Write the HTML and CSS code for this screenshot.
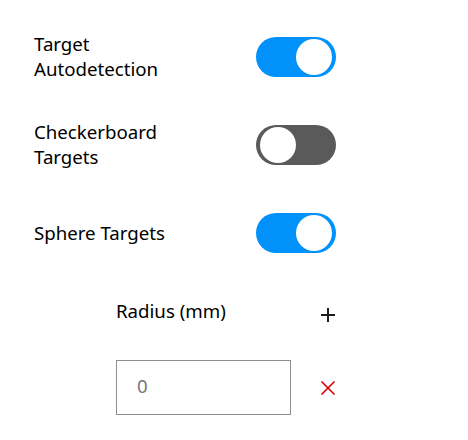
FILE: index.html
```html
<!DOCTYPE html>
<html>
<head>
<meta charset="utf-8">
<link rel="stylesheet" href="styles.css">
</head>
<body>
<div class="panel">
  <div class="row">
    <div class="label">Target<br>Autodetection</div>
    <div class="toggle on"><span class="knob"></span></div>
  </div>
  <div class="row">
    <div class="label">Checkerboard<br>Targets</div>
    <div class="toggle off"><span class="knob"></span></div>
  </div>
  <div class="row">
    <div class="label">Sphere Targets</div>
    <div class="toggle on"><span class="knob"></span></div>
  </div>
  <div class="radius">
    <div class="radius-head">
      <div class="radius-label">Radius (mm)</div>
      <div class="icon-btn">
        <svg width="16" height="16" viewBox="0 0 16 16"><path d="M8 1V15M1 8H15" stroke="#1c1c1c" stroke-width="2" fill="none"/></svg>
      </div>
    </div>
    <div class="radius-item">
      <div class="input">0</div>
      <div class="icon-btn">
        <svg width="16" height="16" viewBox="0 0 16 16"><path d="M1.5 1.5L14.5 14.5M14.5 1.5L1.5 14.5" stroke="#d70000" stroke-width="1.6" fill="none"/></svg>
      </div>
    </div>
  </div>
</div>
</body>
</html>
```
FILE: styles.css
```css
html, body {
  margin: 0;
  background: #ffffff;
}
body {
  font-family: "Noto Sans", "Open Sans", sans-serif;
  font-size: 18.67px;
  line-height: 25px;
  color: #000000;
}
.panel {
  width: 302px;
  padding: 13px 0 0 34px;
}
.row {
  height: 88px;
  display: flex;
  align-items: center;
  justify-content: space-between;
}
.label {
  padding-bottom: 2px;
}
.toggle {
  width: 80px;
  height: 40px;
  border-radius: 20px;
  box-sizing: border-box;
  padding: 0 4px;
  display: flex;
  align-items: center;
}
.toggle.on {
  background: #0091fb;
  justify-content: flex-end;
}
.toggle.off {
  background: #5a5a5a;
  justify-content: flex-start;
}
.knob {
  width: 36px;
  height: 36px;
  border-radius: 50%;
  background: #ffffff;
}
.radius {
  padding: 18px 0 0 82px;
}
.radius-head {
  height: 40px;
  display: flex;
  justify-content: space-between;
  align-items: center;
}
.radius-label {
  align-self: flex-start;
  margin-top: 3px;
}
.icon-btn {
  width: 16px;
  height: 16px;
  display: flex;
}
.radius-item {
  margin-top: 25px;
  display: flex;
  justify-content: space-between;
  align-items: center;
}
.input {
  width: 175px;
  height: 55px;
  box-sizing: border-box;
  border: 1px solid #8e8e8e;
  padding: 12px 20px 0 20px;
  color: #767676;
}
```
